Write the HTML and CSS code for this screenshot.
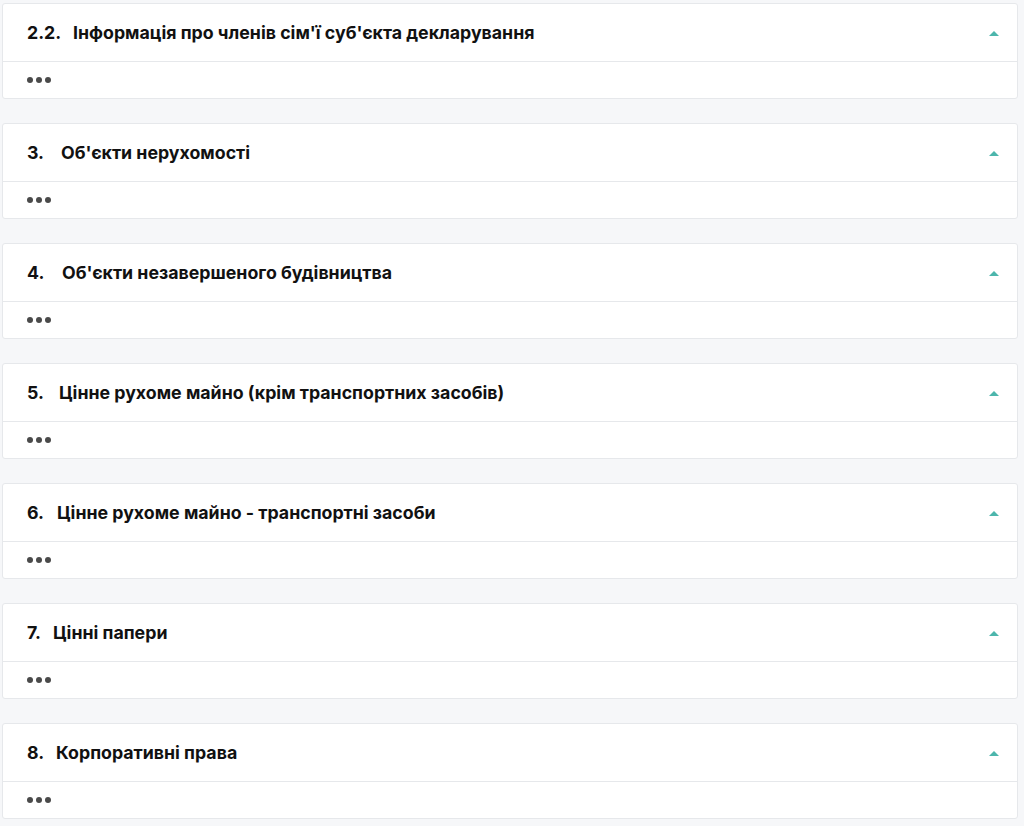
FILE: index.html
```html
<!DOCTYPE html>
<html lang="uk">
  <head>
    <meta charset="UTF-8" />
    <meta name="viewport" content="width=device-width, initial-scale=1.0" />
    <title>Декларація</title>
    <link rel="stylesheet" href="styles.css">
  </head>
  <body>
    <div class="sections">
      <div class="card">
        <div class="card-header">
          <h3 class="title"><span class="num">2.2.</span>Інформація про членів сім'ї суб'єкта декларування</h3>
          <span class="toggle"></span>
        </div>
        <div class="card-body"><span class="dots"><i></i><i></i><i></i></span></div>
      </div>
      <div class="card">
        <div class="card-header">
          <h3 class="title"><span class="num">3.</span>Об'єкти нерухомості</h3>
          <span class="toggle"></span>
        </div>
        <div class="card-body"><span class="dots"><i></i><i></i><i></i></span></div>
      </div>
      <div class="card">
        <div class="card-header">
          <h3 class="title"><span class="num">4.</span>Об'єкти незавершеного будівництва</h3>
          <span class="toggle"></span>
        </div>
        <div class="card-body"><span class="dots"><i></i><i></i><i></i></span></div>
      </div>
      <div class="card">
        <div class="card-header">
          <h3 class="title"><span class="num">5.</span>Цінне рухоме майно (крім транспортних засобів)</h3>
          <span class="toggle"></span>
        </div>
        <div class="card-body"><span class="dots"><i></i><i></i><i></i></span></div>
      </div>
      <div class="card">
        <div class="card-header">
          <h3 class="title"><span class="num">6.</span>Цінне рухоме майно - транспортні засоби</h3>
          <span class="toggle"></span>
        </div>
        <div class="card-body"><span class="dots"><i></i><i></i><i></i></span></div>
      </div>
      <div class="card">
        <div class="card-header">
          <h3 class="title"><span class="num">7.</span>Цінні папери</h3>
          <span class="toggle"></span>
        </div>
        <div class="card-body"><span class="dots"><i></i><i></i><i></i></span></div>
      </div>
      <div class="card">
        <div class="card-header">
          <h3 class="title"><span class="num">8.</span>Корпоративні права</h3>
          <span class="toggle"></span>
        </div>
        <div class="card-body"><span class="dots"><i></i><i></i><i></i></span></div>
      </div>
    </div>
  </body>
</html>
```

FILE: styles.css
```css
* {
  box-sizing: border-box;
  margin: 0;
  padding: 0;
}

body {
  background-color: #f6f7f9;
  font-family: Inter, "Noto Sans", Arial, sans-serif;
  color: #111;
}

.sections {
  padding: 3px 6px 0 2px;
}

.card {
  background-color: #ffffff;
  border: 1px solid #e6e8eb;
  border-radius: 3px;
  margin-bottom: 24px;
}

.card-header {
  display: flex;
  align-items: center;
  justify-content: space-between;
  height: 58px;
  padding: 0 18px 0 24px;
  border-bottom: 1px solid #e6e8eb;
}

.title {
  font-size: 17.75px;
  font-weight: 700;
  color: #111;
}

.num {
  display: inline-block;
  width: 46px;
}

.card:nth-child(2) .num { width: 34px; }
.card:nth-child(3) .num { width: 35px; }
.card:nth-child(4) .num { width: 32px; }
.card:nth-child(5) .num { width: 30px; }
.card:nth-child(6) .num { width: 26px; }
.card:nth-child(7) .num { width: 29px; }

.toggle {
  width: 0;
  height: 0;
  border-left: 5px solid transparent;
  border-right: 5px solid transparent;
  border-bottom: 5px solid #4db6ac;
  margin-top: 1px;
}

.card-body {
  display: flex;
  align-items: center;
  height: 36px;
  padding: 0 24px;
}

.dots {
  display: flex;
  gap: 3px;
}

.dots i {
  width: 6px;
  height: 6px;
  border-radius: 50%;
  background-color: #4a4a4a;
}
```
